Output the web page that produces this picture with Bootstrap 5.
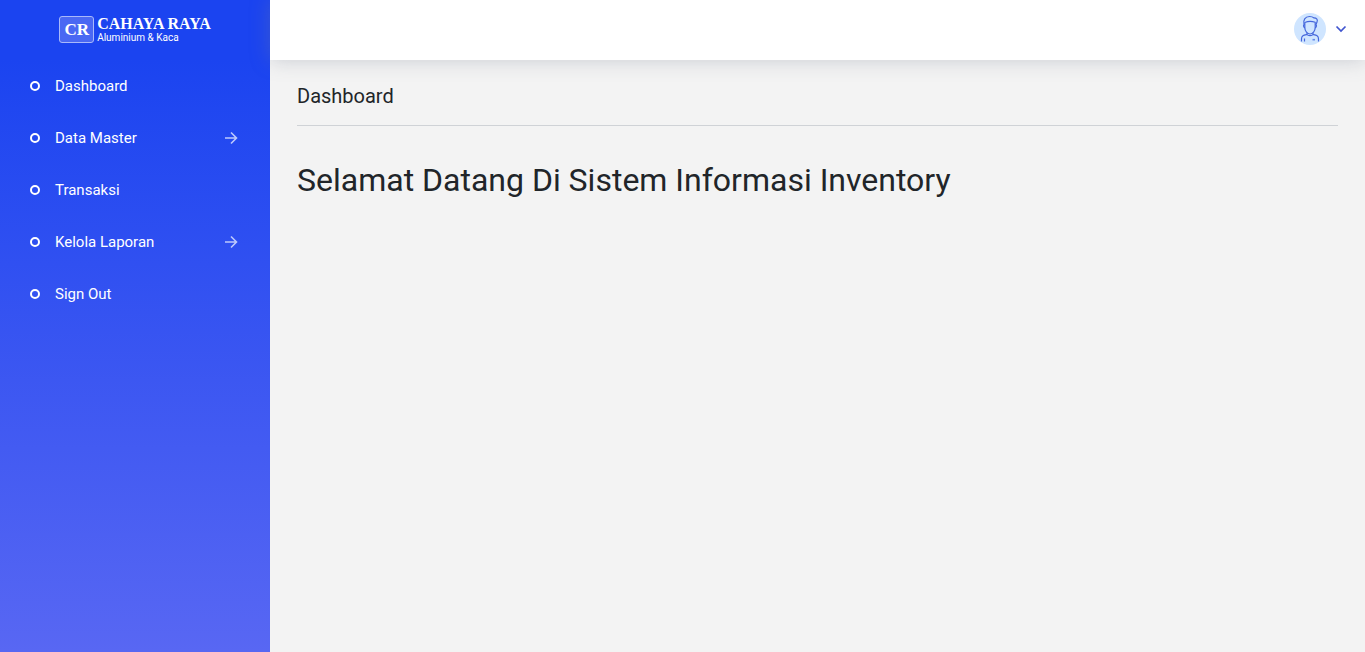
<!DOCTYPE html>
<html lang="id">
<head>
<meta charset="utf-8">
<meta name="viewport" content="width=device-width, initial-scale=1">
<title>Dashboard - Cahaya Raya</title>
<link href="https://cdn.jsdelivr.net/npm/bootstrap@5.3.0/dist/css/bootstrap.min.css" rel="stylesheet">
<style>
body { font-family: Roboto, "Open Sans", sans-serif; background: #f3f3f3; color: #212529; }
.side { width: 270px; background: linear-gradient(to bottom, #1b44f0 60px, #5867f3 100%); }
.brand { height: 58px; gap: 3px; color: #fff; }
.brand-mark { width: 35px; height: 27px; border: 1px solid #a9b9fa; border-radius: 3px; background: #4a68f3; font: bold 17px/25px "Liberation Serif", serif; }
.brand-name { font: bold 16px/16px "Liberation Serif", serif; }
.brand-sub { font: 10px/11px Roboto, sans-serif; }
.menu { padding-top: 8px; gap: 12px; }
.menu .nav-link { height: 40px; padding: 0 32px 0 30px; color: #fff; font-size: 15px; }
.menu .nav-link:hover { background: rgba(255, 255, 255, .1); }
.bullet { width: 10px; height: 10px; margin-right: 15px; border: 2px solid #fff; border-radius: 50%; }
.topbar { height: 60px; padding: 0 17px 2px 0; box-shadow: 0 0 20px rgba(120, 130, 150, .35); }
.content { padding: 24px 27px; }
.page-title { font-size: 20px; line-height: 24px; margin: 0; padding-bottom: 17px; border-bottom: 1px solid #cfd2d6; }
.welcome { font-size: 32px; line-height: 38px; font-weight: 400; margin: 35px 0 0; }
</style>
</head>
<body>
<div class="d-flex min-vh-100">
  <aside class="side flex-shrink-0">
    <a href="#" class="brand d-flex align-items-center justify-content-center text-decoration-none">
      <span class="brand-mark text-center">CR</span>
      <span class="d-flex flex-column text-nowrap"><span class="brand-name">CAHAYA RAYA</span><span class="brand-sub">Aluminium &amp; Kaca</span></span>
    </a>
    <nav class="menu nav flex-column" aria-label="Menu">
      <a href="#" class="nav-link d-flex align-items-center"><span class="bullet"></span>Dashboard</a>
      <a href="#" class="nav-link d-flex align-items-center"><span class="bullet"></span>Data Master
        <svg class="ms-auto" width="14" height="14" viewBox="0 0 14 14" fill="none" stroke="#bdc9fc" stroke-width="1.6" aria-hidden="true"><path d="M1 7h11M7 1.500 12.500 7l-5.500 5.500"/></svg></a>
      <a href="#" class="nav-link d-flex align-items-center"><span class="bullet"></span>Transaksi</a>
      <a href="#" class="nav-link d-flex align-items-center"><span class="bullet"></span>Kelola Laporan
        <svg class="ms-auto" width="14" height="14" viewBox="0 0 14 14" fill="none" stroke="#bdc9fc" stroke-width="1.6" aria-hidden="true"><path d="M1 7h11M7 1.500 12.500 7l-5.500 5.500"/></svg></a>
      <a href="#" class="nav-link d-flex align-items-center"><span class="bullet"></span>Sign Out</a>
    </nav>
  </aside>
  <div class="flex-grow-1">
    <header class="topbar bg-white d-flex align-items-center justify-content-end">
      <button type="button" class="btn border-0 p-0 d-flex align-items-center gap-2" aria-label="Profil">
        <svg width="32" height="32" viewBox="0 0 32 32" fill="none" stroke="#4567dc" stroke-width="1.2" stroke-linejoin="round" aria-hidden="true">
          <circle cx="16" cy="16" r="16" fill="#cfe5ff" stroke="none"/>
          <path d="M10 11.500c-1-4.500 1-8 5.500-8 2.500 0 3.500.5 4.300 1.400 3 0 4.200 1.600 3.200 4.100l-1 2.500"/>
          <path d="M10.800 9.500c3-1.300 7.400-1.300 10.400-.3v5.300c0 3.500-2.600 6.500-5.200 6.500s-5.200-3-5.200-6.500z"/>
          <path d="M10.800 11.500c-1.700 0-1.700 3 .2 3.300M21.200 11.500c1.700 0 1.700 3-.2 3.300"/>
          <path d="M13 20v1.500c-3 .7-5.500 1-5.500 4.500v2.500M19 20v1.500c3 .7 5.500 1 5.500 4.500v2.500M13 21.500c1 1.500 5 1.500 6 0M10.500 25.500v3"/>
          <path d="M18.500 26.700h2.500" stroke="#668bea" stroke-width="1.600"/>
        </svg>
        <svg width="14" height="14" viewBox="0 0 14 14" fill="none" stroke="#4055cf" stroke-width="1.700" aria-hidden="true"><path d="m2.500 4.500 4.500 4.500 4.500-4.500"/></svg>
      </button>
    </header>
    <main class="content">
      <h1 class="page-title fw-normal">Dashboard</h1>
      <h2 class="welcome">Selamat Datang Di Sistem Informasi Inventory</h2>
    </main>
  </div>
</div>
<script src="https://cdn.jsdelivr.net/npm/bootstrap@5.3.0/dist/js/bootstrap.bundle.min.js"></script>
</body>
</html>
